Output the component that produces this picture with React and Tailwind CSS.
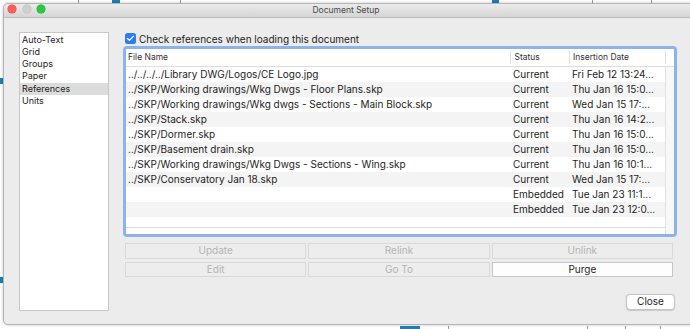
import { Check } from 'lucide-react';

const font = { fontFamily: 'Inter, "Noto Sans", sans-serif' };

const pages = ['Auto-Text', 'Grid', 'Groups', 'Paper', 'References', 'Units'];

const refs = [
  ['../../../../Library DWG/Logos/CE Logo.jpg', 'Current', 'Fri Feb 12 13:24...'],
  ['../SKP/Working drawings/Wkg Dwgs - Floor Plans.skp', 'Current', 'Thu Jan 16 15:0...'],
  ['../SKP/Working drawings/Wkg dwgs - Sections - Main Block.skp', 'Current', 'Wed Jan 15 17:...'],
  ['../SKP/Stack.skp', 'Current', 'Thu Jan 16 14:2...'],
  ['../SKP/Dormer.skp', 'Current', 'Thu Jan 16 15:0...'],
  ['../SKP/Basement drain.skp', 'Current', 'Thu Jan 16 15:0...'],
  ['../SKP/Working drawings/Wkg Dwgs - Sections - Wing.skp', 'Current', 'Thu Jan 16 10:1...'],
  ['../SKP/Conservatory Jan 18.skp', 'Current', 'Wed Jan 15 17:...'],
  ['', 'Embedded', 'Tue Jan 23 11:1...'],
  ['', 'Embedded', 'Tue Jan 23 12:0...'],
];

const actions = [
  { label: 'Update', enabled: false },
  { label: 'Relink', enabled: false },
  { label: 'Unlink', enabled: false },
  { label: 'Edit', enabled: false },
  { label: 'Go To', enabled: false },
  { label: 'Purge', enabled: true },
];

function DesktopMarks() {
  // bits of the drawing app peeking out behind the dialog
  return (
    <>
      <div className="absolute left-[112px] top-0 h-[3px] w-[8px] bg-[#1e7fb8]" />
      <div className="absolute left-[78px] top-0 h-[3px] w-[1px] bg-[#9a9a9a]" />
      <div className="absolute left-[180px] top-0 h-[3px] w-[1px] bg-[#9a9a9a]" />
      <div className="absolute left-[492px] top-0 h-[3px] w-[7px] bg-[#1e7fb8]" />
      <div className="absolute left-[592px] top-0 h-[3px] w-[1px] bg-[#9a9a9a]" />
      <div className="absolute left-[651px] top-0 h-[3px] w-[1px] bg-[#9a9a9a]" />
      <div className="absolute left-0 top-[277px] h-[6px] w-[3px] bg-[#1e7fb8]" />
      <div className="absolute left-0 top-[78px] h-[6px] w-[3px] bg-[#1e7fb8]" />
      <div className="absolute left-[400px] top-[326px] h-[3px] w-[20px] bg-[#1e7fb8]" />
      <div className="absolute left-[448px] top-[326px] h-[3px] w-[1px] bg-[#9a9a9a]" />
      <div className="absolute left-[587px] top-[326px] h-[3px] w-[1px] bg-[#9a9a9a]" />
      <div className="absolute left-[625px] top-[326px] h-[3px] w-[1px] bg-[#9a9a9a]" />
      <div className="absolute left-[660px] top-[326px] h-[3px] w-[1px] bg-[#9a9a9a]" />
    </>
  );
}

export default function App() {
  return (
    <div className="relative h-[329px] w-[690px] overflow-hidden bg-white pl-[3px] pt-[3px] text-[#1d1d1d]" style={font}>
      <DesktopMarks />
      <div className="relative flex h-[322px] w-[700px] flex-col rounded-[5px] border border-[#b4b4b4] bg-[#ececec] shadow-[0_0_3px_rgba(0,0,0,0.25)]">
        <div className="relative flex h-[14px] items-center rounded-t-[5px] border-b border-[#bdbdbd] bg-gradient-to-b from-[#ebebeb] to-[#d5d5d5]">
          <div className="absolute left-[4px] top-[1px] flex gap-[6.5px]">
            <span className="h-[8px] w-[8px] rounded-full bg-[#fc5f57] ring-[0.5px] ring-[#e0443e]" />
            <span className="h-[8px] w-[8px] rounded-full bg-[#cfcfcf] ring-[0.5px] ring-[#bdbdbd]" />
            <span className="h-[8px] w-[8px] rounded-full bg-[#2ac840] ring-[0.5px] ring-[#1aab29]" />
          </div>
          <div className="w-[684px] text-center text-[8.5px] leading-[13px] text-[#4a4a4a]">Document Setup</div>
        </div>

        <div className="flex pl-[15px] pt-[13.5px]">
          <div className="h-[279px] w-[90px] border border-[#c8c8c8] bg-white pt-[1px]">
            {pages.map((page) => (
              <div
                key={page}
                className={`h-[12.3px] pl-[2px] text-[9px] leading-[12.3px] ${page === 'References' ? 'bg-[#dcdcdc]' : ''}`}
              >
                {page}
              </div>
            ))}
          </div>

          <div className="ml-[14px] flex w-[554px] flex-col">
            <div className="flex h-[14px] items-center pl-[2px]">
              <span className="flex h-[11px] w-[11px] items-center justify-center rounded-[2.5px] bg-[#2f7bf5]">
                <Check size={9} strokeWidth={3.5} className="text-white" />
              </span>
              <span className="ml-[3px] text-[10px] leading-none">Check references when loading this document</span>
            </div>

            <div className="flex h-[191px] flex-col rounded-[4px] border-[3px] border-[#8cb3ec] bg-white">
              <div className="grid h-[18.5px] grid-cols-[384px_59px_96px_1fr] border-b border-[#dedede] text-[8.5px] leading-[17.5px] text-[#333]">
                <div className="pl-[2px]">File Name</div>
                <div className="my-[2px] border-l border-[#e0e0e0] pl-[3.5px] leading-[13.5px]">Status</div>
                <div className="my-[2px] border-l border-[#e0e0e0] pl-[3px] leading-[13.5px]">Insertion Date</div>
                <div className="my-[2px] border-l border-[#e0e0e0]" />
              </div>
              <div className="flex flex-1">
                <div className="flex w-[539px] flex-col">
                  {refs.map(([name, status, date], i) => (
                    <div
                      key={i}
                      className={`grid h-[15px] grid-cols-[384px_59px_96px] text-[10px] leading-[15px] ${i % 2 ? 'bg-[#f4f4f4]' : ''}`}
                    >
                      <div className="overflow-hidden whitespace-nowrap pl-[2px]">{name}</div>
                      <div className="pl-[3px]">{status}</div>
                      <div className="whitespace-nowrap pl-[3px]">{date}</div>
                    </div>
                  ))}
                  <div className="h-[10.5px] border-b border-[#dcdcdc]" />
                </div>
                <div className="flex-1 border-l border-[#e2e2e2] bg-[#f8f8f8]" />
              </div>
            </div>

            <div className="ml-[2px] mt-[6.5px] grid w-[548px] grid-cols-3 gap-x-[2px] gap-y-[3px]">
              {actions.map((a) => (
                <div
                  key={a.label}
                  className={`flex h-[15.5px] items-center justify-center border text-[10px] ${
                    a.enabled
                      ? 'border-[#c6c6c6] bg-[#fdfdfd] text-[#1d1d1d]'
                      : 'border-[#d9d9d9] bg-[#ededed] text-[#b3b3b3]'
                  }`}
                >
                  {a.label}
                </div>
              ))}
            </div>

            <div className="mr-[2px] mt-[16.5px] flex justify-end">
              <div className="flex h-[16.5px] w-[49px] items-center justify-center rounded-[4px] border border-[#c4c4c4] bg-white text-[10px] shadow-[0_0.5px_1px_rgba(0,0,0,0.15)]">
                Close
              </div>
            </div>
          </div>
        </div>
      </div>
    </div>
  );
}
